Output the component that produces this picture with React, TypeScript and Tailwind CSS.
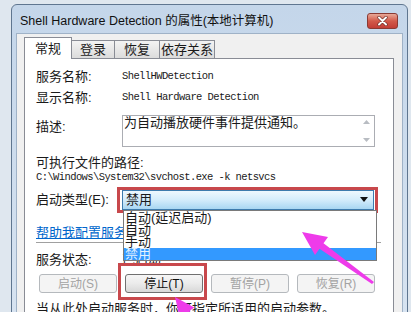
const ButtonBox = ({ label, disabled }: { label: string; disabled?: boolean }) => (
  <div
    className={
      disabled
        ? 'flex h-[19px] w-[78px] items-center justify-center rounded-[3px] border border-[#b5b9bd] bg-[#f4f4f4] text-[12px] text-[#a3a3a3]'
        : 'flex h-[19px] w-[78px] items-center justify-center rounded-[3px] border border-[#707070] bg-gradient-to-b from-[#f6f6f6] via-[#ebebeb] to-[#d8d8d8] text-[12px] text-[#111]'
    }
  >
    {label}
  </div>
)

const App = () => (
  <div className="relative h-[312px] w-[411px] overflow-hidden bg-[#dfe7ef] pl-[11px] pt-[4px] font-['Liberation_Sans','Noto_Sans_CJK_SC',sans-serif] text-[#1a1a1a]">
    <div className="w-[397px] rounded-t-[6px] border border-[#5f7690] bg-gradient-to-b from-[#c4d6ea] to-[#d8e4f1] px-[4px]">
      {/* title bar */}
      <div className="flex h-[28px] items-start justify-between pl-[4px] pr-[5px]">
        <span className="mt-[8px] text-[12.5px] leading-[16px] text-[#111]">Shell Hardware Detection 的属性(本地计算机)</span>
        <div className="mt-[8px] flex h-[16px] w-[31px] items-center justify-center rounded-[3px] border border-[#8a3a33] bg-gradient-to-b from-[#e7a898] via-[#d2594a] to-[#c23d36]">
          <svg width="11" height="10" viewBox="0 0 11 10">
            <path d="M2 1.5 L9 8.5 M9 1.5 L2 8.5" stroke="#6b2a24" strokeWidth="3.2" strokeLinecap="round" />
            <path d="M2 1.5 L9 8.5 M9 1.5 L2 8.5" stroke="#ffffff" strokeWidth="2" strokeLinecap="round" />
          </svg>
        </div>
      </div>

      {/* body */}
      <div className="h-[300px] border border-[#9fb2c7] bg-[#f0f0f0] pl-[7px] pr-[8px] pt-[3px]">
        {/* tabs */}
        <div className="flex h-[21px] items-end text-[13px]">
          <div className="relative z-10 -mb-px flex h-[22px] w-[48px] items-center justify-center border border-b-0 border-[#898c95] bg-white">常规</div>
          <div className="-ml-px flex h-[18px] w-[44px] items-center justify-center border border-b-0 border-[#898c95] bg-gradient-to-b from-[#f3f3f3] to-[#dcdcdc]">登录</div>
          <div className="-ml-px flex h-[18px] w-[46px] items-center justify-center border border-b-0 border-[#898c95] bg-gradient-to-b from-[#f3f3f3] to-[#dcdcdc]">恢复</div>
          <div className="-ml-px flex h-[18px] w-[56px] items-center justify-center border border-b-0 border-[#898c95] bg-gradient-to-b from-[#f3f3f3] to-[#dcdcdc]">依存关系</div>
        </div>

        {/* panel */}
        <div className="h-[280px] border border-[#898c95] bg-white pl-[11px] pt-[8px] text-[13px]">
          <div className="flex h-[20px] items-center">
            <span className="w-[86px]">服务名称:</span>
            <span className="font-['Liberation_Mono',monospace] text-[10.5px] tracking-[-0.6px]">ShellHWDetection</span>
          </div>
          <div className="mt-[1px] flex h-[20px] items-center">
            <span className="w-[86px]">显示名称:</span>
            <span className="font-['Liberation_Mono',monospace] text-[10.5px] tracking-[-0.6px]">Shell Hardware Detection</span>
          </div>
          <div className="mt-[7px] flex">
            <span className="mt-[2px] w-[86px] leading-[20px]">描述:</span>
            <div className="flex h-[32px] w-[253px] border border-[#abadb3]">
              <span className="flex-1 pl-[1px] text-[13px] leading-[14px]">为自动播放硬件事件提供通知。</span>
              <div className="flex w-[15px] flex-col items-center justify-between py-[4px]">
                <svg width="7" height="4" viewBox="0 0 7 4"><path d="M0 4 L3.5 0 L7 4 Z" fill="#b8bcc2" /></svg>
                <svg width="7" height="4" viewBox="0 0 7 4"><path d="M0 0 L3.5 4 L7 0 Z" fill="#b8bcc2" /></svg>
              </div>
            </div>
          </div>
          <div className="mt-[8px] h-[15px] leading-[15px]">可执行文件的路径:</div>
          <div className="h-[14px] font-['Liberation_Mono',monospace] text-[10.5px] leading-[14px] tracking-[-0.6px]">
            {'C:\\Windows\\System32\\svchost.exe -k netsvcs'}
          </div>

          <div className="mt-[2px] flex h-[27px] items-center">
            <span className="w-[86px]">启动类型(E):</span>
            <div className="relative h-[20px] w-[252px]">
              <div className="absolute -bottom-[3px] -left-[5px] -right-[4px] -top-[3px] border-[3px] border-[#c8484c]" />
              <div className="relative flex h-full items-center justify-between border border-[#3d7bad] bg-gradient-to-b from-[#eef8fe] via-[#d3ecfb] to-[#a8d6f2] pl-[3px] pr-[5px]">
                <span className="leading-[16px]">禁用</span>
                <svg width="8" height="5" viewBox="0 0 8 5"><path d="M0 0 L8 0 L4 5 Z" fill="#111" /></svg>
              </div>
              <div className="absolute left-[1px] top-full z-20 w-[254px] border border-[#7a7a7a] bg-white pt-[1px] text-[13px] leading-[12px]">
                <div className="h-[12px] px-[1px]">自动(延迟启动)</div>
                <div className="h-[12px] px-[1px]">自动</div>
                <div className="h-[12px] px-[1px]">手动</div>
                <div className="h-[12px] bg-[#3399ff] px-[1px] text-[#e6f2ff]">禁用</div>
              </div>
            </div>
          </div>

          <div className="mt-[12px] h-[16px] leading-[16px] text-[#0066cc] underline">帮助我配置服务启动选项。</div>
          <div className="mt-[1px] h-px w-[345px] bg-[#a0a0a0]" />

          <div className="mt-[9px] flex h-[16px] items-center">
            <span className="w-[86px]">服务状态:</span>
            <span>已启动</span>
          </div>

          <div className="mt-[6px] flex gap-[8px] pl-[3px]">
            <ButtonBox label="启动(S)" disabled />
            <div className="relative">
              <div className="absolute -bottom-[7px] -left-[7px] -right-[4px] -top-[11px] border-[3px] border-[#c8484c]" />
              <ButtonBox label="停止(T)" />
            </div>
            <ButtonBox label="暂停(P)" disabled />
            <ButtonBox label="恢复(R)" disabled />
          </div>

          <div className="mt-[8px] leading-[16px]">当从此处启动服务时，你可指定所适用的启动参数。</div>
        </div>
      </div>
    </div>

    {/* annotation arrows */}
    <svg className="pointer-events-none absolute left-0 top-0 z-30" width="411" height="312" viewBox="0 0 411 312">
      <polygon
        points="302,232 328,237 323.5,243.2 374,282 372,284 319.5,248.8 315,255"
        fill="#ee3bea"
      />
      <polygon points="175,297 194.3,307.5 189.5,311.1 204,330 197,334 184.7,314.7 179.9,318.3" fill="#ee3bea" />
    </svg>
  </div>
)

export default App
